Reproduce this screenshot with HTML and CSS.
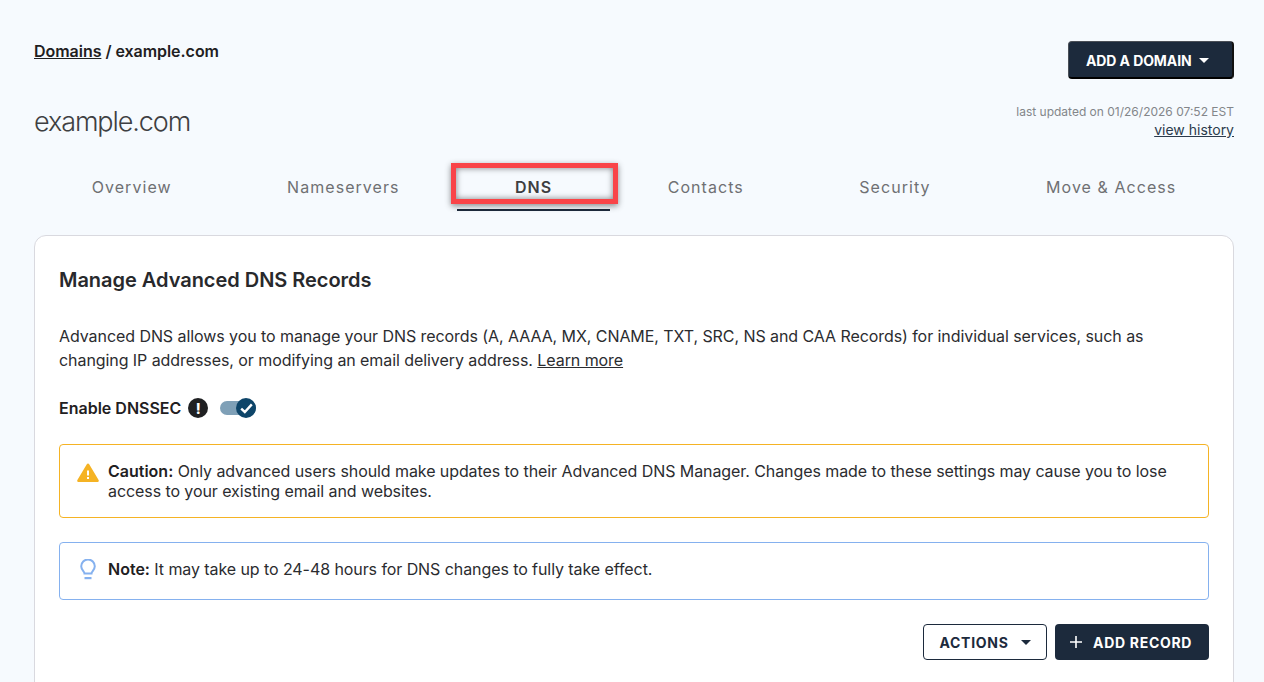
FILE: index.html
```html
<!DOCTYPE html>
<html lang="en">
<head>
<meta charset="utf-8">
<title>example.com DNS</title>
<link rel="stylesheet" href="styles.css">
</head>
<body>
<div class="page">
  <header class="top">
    <div class="crumbs"><a href="#">Domains</a> / example.com</div>
    <button class="btn-domain">ADD A DOMAIN<span class="caret caret-white"></span></button>
  </header>
  <div class="title-row">
    <h1>example.com</h1>
    <div class="meta">
      <div class="updated">last updated on 01/26/2026 07:52 EST</div>
      <a class="history" href="#">view history</a>
    </div>
  </div>
  <nav class="tabs">
    <a class="tab" href="#">Overview</a>
    <a class="tab" href="#">Nameservers</a>
    <a class="tab active" href="#">DNS<span class="highlight"></span></a>
    <a class="tab" href="#">Contacts</a>
    <a class="tab" href="#">Security</a>
    <a class="tab" href="#">Move &amp; Access</a>
  </nav>
  <section class="card">
    <h2>Manage Advanced DNS Records</h2>
    <p class="intro">Advanced DNS allows you to manage your DNS records (A, AAAA, MX, CNAME, TXT, SRC, NS and CAA Records) for individual services, such as changing IP addresses, or modifying an email delivery address. <a href="#">Learn more</a></p>
    <div class="dnssec">
      <span class="dnssec-label">Enable DNSSEC</span>
      <span class="info-dot">!</span>
      <span class="toggle">
        <span class="knob">
          <svg width="13" height="11" viewBox="0 0 13 11"><path d="M1.200 5.700 4.800 9 11.800 1.400" fill="none" stroke="#fff" stroke-width="2.400"/></svg>
        </span>
      </span>
    </div>
    <div class="alert caution">
      <svg class="alert-icon" width="22" height="19" viewBox="0 0 22 19"><path d="M11 .5c.5 0 .9.3 1.200.7l9.400 15.900c.5.8-.1 1.900-1.200 1.900H1.600C.5 19-.1 17.900.4 17.100L9.800 1.200C10.100.8 10.500.5 11 .5z" fill="#f5b324"/><rect x="10" y="7.500" width="2" height="5" fill="#fff"/><rect x="10" y="14" width="2" height="2" fill="#fff"/></svg>
      <p><strong>Caution:</strong> Only advanced users should make updates to their Advanced DNS Manager. Changes made to these settings may cause you to lose access to your existing email and websites.</p>
    </div>
    <div class="alert note">
      <svg class="alert-icon" width="16" height="21" viewBox="0 0 16 21"><path d="M4.500 14.500c0-1.800-3.300-3.500-3.300-7.200a6.800 6.800 0 0 1 13.600 0c0 3.700-3.300 5.400-3.300 7.200z" fill="none" stroke="#85b1ef" stroke-width="2"/><rect x="4.500" y="18" width="7" height="2.200" fill="#85b1ef"/></svg>
      <p><strong>Note:</strong> It may take up to 24-48 hours for DNS changes to fully take effect.</p>
    </div>
    <div class="actions">
      <button class="btn-actions">ACTIONS<span class="caret caret-dark"></span></button>
      <button class="btn-add"><svg width="12" height="12" viewBox="0 0 12 12"><path d="M6 0v12M0 6h12" stroke="#fff" stroke-width="1.600" fill="none"/></svg>ADD RECORD</button>
    </div>
  </section>
</div>
</body>
</html>
```
FILE: styles.css
```css
* { box-sizing: border-box; }
html, body { margin: 0; height: 100%; overflow: hidden; }
body { background: #f6fafe; font-family: Inter, "Liberation Sans", sans-serif; color: #1f2022; }
a { color: inherit; }
.page { padding: 41px 30px 0 34px; }
.top { display: flex; justify-content: space-between; align-items: flex-start; }
.crumbs { font-size: 16px; font-weight: 600; line-height: 20px; letter-spacing: -.04px; }
.btn-domain { display: flex; align-items: center; width: 166px; height: 38px; padding: 2px 0 0 17px; background: #1c2a3c; color: #fff; border: 1px solid #1c2a3c; border-top-color: #4a4f57; border-left-color: #4a4f57; border-bottom: 2px solid #000; border-right: 2px solid #111; border-radius: 4px; font: 700 14px Inter, sans-serif; letter-spacing: -.1px; }
.caret { display: inline-block; width: 0; height: 0; border-left: 5.5px solid transparent; border-right: 5.5px solid transparent; }
.caret-white { border-top: 5.5px solid #fff; margin-left: 7px; }
.caret-dark { border-top: 5px solid #1c2a3c; margin-left: 13px; }
.title-row { display: flex; justify-content: space-between; align-items: flex-start; margin-top: 24px; height: 41px; }
h1 { margin: 1px 0 0; font-size: 27px; font-weight: 300; line-height: 36px; color: #3e3f42; letter-spacing: -1.1px; }
.meta { text-align: right; }
.updated { font-size: 12px; line-height: 18px; color: #83868a; }
.history { display: block; font-size: 14px; line-height: 18px; color: #2b3a4c; }
.tabs { display: flex; margin-top: 19px; height: 48px; }
.tab { position: relative; flex: 1 1 auto; text-align: center; font-size: 16px; line-height: 23px; padding-top: 13px; letter-spacing: 1.05px; color: #6f7073; text-decoration: none; height: 48px; }
.tab.active { color: #3d3e41; font-weight: 600; border-bottom: 2px solid #1c2a3c; }
.highlight { position: absolute; left: -6px; right: -8px; top: 0; height: 41px; border: 5px solid #f94448; box-shadow: 0 2px 6px rgba(0,0,0,.45), inset 0 0 6px rgba(0,0,0,.5); }
.card { margin-top: 24px; padding: 30px 24px 40px; height: 600px; background: #fff; border: 1px solid #d9d9df; border-radius: 12px; }
h2 { margin: 0; font-size: 20px; font-weight: 600; line-height: 28px; color: #28292c; letter-spacing: -.03px; }
.intro { margin: 30px 0 0; font-size: 16px; line-height: 24px; color: #2b2c2f; letter-spacing: -.07px; }
.dnssec { display: flex; align-items: center; margin-top: 24px; height: 24px; }
.dnssec-label { font-size: 16px; font-weight: 600; }
.info-dot { display: flex; align-items: center; justify-content: center; width: 20px; height: 20px; margin-left: 7px; border-radius: 50%; background: #1f2022; color: #fff; font-size: 14px; font-weight: 800; }
.toggle { position: relative; display: block; width: 36px; height: 14px; margin-left: 12px; border-radius: 7px; background: #7fa0b7; }
.knob { position: absolute; right: 0; top: -3px; display: flex; align-items: center; justify-content: center; width: 20px; height: 20px; border-radius: 50%; background: #0e4569; }
.alert { display: flex; align-items: flex-start; margin-top: 24px; border: 1px solid; border-radius: 4px; }
.alert p { margin: 0; font-size: 16px; line-height: 20px; color: #2b2c2f; letter-spacing: -.08px; }
.alert strong { font-weight: 600; color: #1f2022; letter-spacing: 0; }
.alert-icon { flex: none; }
.caution { height: 74px; padding: 16px 24px 0 17px; border-color: #f5b324; margin-top: 24px; }
.caution .alert-icon { margin: 2px 9px 0 0; }
.note { height: 58px; padding: 16px 24px 0 20px; border-color: #85b1ef; margin-top: 24px; }
.note .alert-icon { margin: 0 12px 0 0; }
.actions { display: flex; justify-content: flex-end; gap: 8px; margin-top: 24px; }
.btn-actions, .btn-add { display: flex; align-items: center; height: 36px; border-radius: 4px; font: 700 14px Inter, sans-serif; letter-spacing: .7px; }
.btn-actions { width: 124px; padding: 0 0 0 15.5px; background: #fff; color: #1c2a3c; border: 1px solid #1c2a3c; }
.btn-actions .caret { margin-left: 12.5px; }
.btn-add { width: 154px; padding: 0 0 0 15px; gap: 11px; background: #1c2a3c; color: #fff; border: 0; }
```
